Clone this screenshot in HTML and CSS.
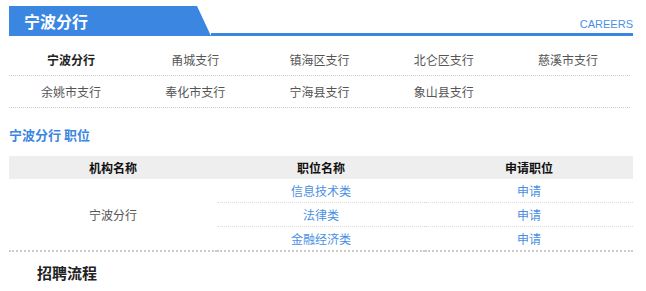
FILE: index.html
```html
<!DOCTYPE html>
<html lang="zh-CN">
<head>
    <meta charset="UTF-8">
    <meta name="viewport" content="width=device-width, initial-scale=1.0">
    <title>宁波分行 招聘</title>
    <link rel="stylesheet" href="styles.css">
</head>
<body>
    <div class="page">
        <div class="title-bar">
            <h2 class="title-tab">宁波分行</h2>
            <div class="title-rest"><span class="careers">CAREERS</span></div>
        </div>

        <div class="branches">
            <ul class="branch-row">
                <li class="current">宁波分行</li>
                <li>甬城支行</li>
                <li>镇海区支行</li>
                <li>北仑区支行</li>
                <li>慈溪市支行</li>
            </ul>
            <ul class="branch-row">
                <li>余姚市支行</li>
                <li>奉化市支行</li>
                <li>宁海县支行</li>
                <li>象山县支行</li>
                <li></li>
            </ul>
        </div>

        <h3 class="section-title">宁波分行 职位</h3>

        <table class="jobs">
            <thead>
                <tr>
                    <th>机构名称</th>
                    <th>职位名称</th>
                    <th>申请职位</th>
                </tr>
            </thead>
            <tbody>
                <tr>
                    <td rowspan="3" class="org">宁波分行</td>
                    <td><a href="#">信息技术类</a></td>
                    <td><a href="#">申请</a></td>
                </tr>
                <tr>
                    <td><a href="#">法律类</a></td>
                    <td><a href="#">申请</a></td>
                </tr>
                <tr class="last">
                    <td><a href="#">金融经济类</a></td>
                    <td><a href="#">申请</a></td>
                </tr>
            </tbody>
        </table>

        <h3 class="process-title">招聘流程</h3>
    </div>
</body>
</html>
```

FILE: styles.css
```css
body {
    margin: 0;
    font-family: "Noto Sans CJK SC", "Liberation Sans", sans-serif;
    font-size: 12px;
    color: #555;
    background: #fff;
}
ul {
    list-style: none;
    margin: 0;
    padding: 0;
}
a {
    color: #4a8fe4;
    text-decoration: none;
}
.page {
    width: 624px;
    padding: 6px 0 0 9px;
}
.title-bar {
    display: flex;
    height: 30px;
}
.title-tab {
    width: 187px;
    margin: 0;
    padding-left: 15px;
    height: 30px;
    line-height: 31px;
    font-size: 16px;
    font-weight: bold;
    color: #fff;
    background: #3a86e0;
    clip-path: polygon(0 0, 188px 0, 100% 100%, 0 100%);
}
.title-rest {
    flex: 1;
    display: flex;
    align-items: flex-end;
    justify-content: flex-end;
    border-bottom: 3px solid #3a86e0;
}
.careers {
    font-family: "Liberation Sans", Arial, sans-serif;
    font-size: 11px;
    line-height: 13px;
    padding-bottom: 2px;
    color: #4a8fe4;
}
.branches {
    width: 621px;
    margin-top: 8px;
}
.branch-row {
    display: grid;
    grid-template-columns: repeat(5, 1fr);
    border-bottom: 1px dotted #ccc;
}
.branch-row li {
    height: 31px;
    line-height: 31px;
    text-align: center;
    color: #555;
}
.branch-row li.current {
    color: #222;
    font-weight: bold;
}
.section-title {
    margin: 18px 0 0;
    font-size: 13px;
    line-height: 17px;
    color: #3a86e0;
    font-weight: bold;
}
.jobs {
    width: 624px;
    margin-top: 13px;
    border-collapse: collapse;
    table-layout: fixed;
}
.jobs th {
    height: 23px;
    padding: 0;
    background: #eee;
    color: #111;
    font-weight: bold;
    line-height: 23px;
}
.jobs td {
    height: 23px;
    padding: 0;
    text-align: center;
    line-height: 23px;
    border-bottom: 1px dotted #ddd;
}
.jobs td.org,
.jobs tr.last td {
    border-bottom: 2px dotted #ccc;
}
.process-title {
    margin: 10px 0 0;
    padding-left: 28px;
    font-size: 15px;
    line-height: 21px;
    font-weight: bold;
    color: #222;
}
```
